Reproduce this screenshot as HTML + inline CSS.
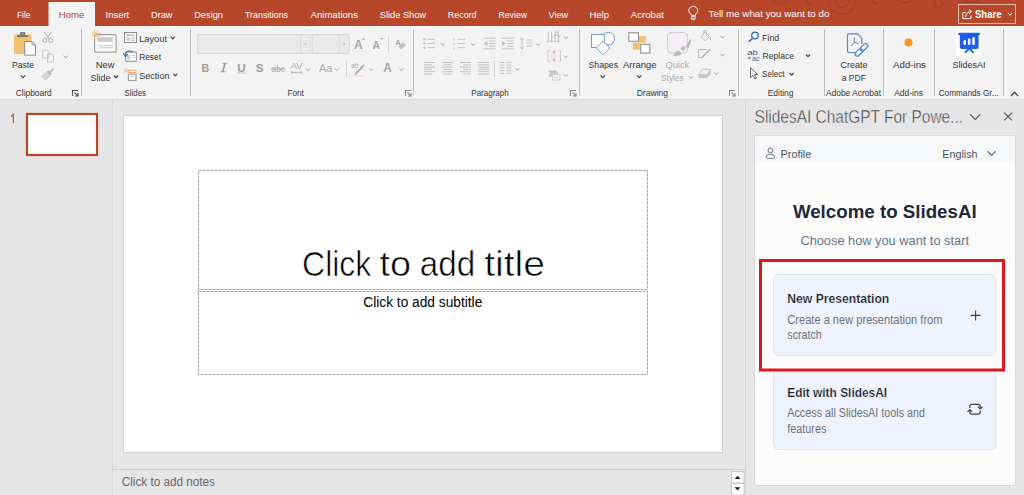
<!DOCTYPE html>
<html><head><meta charset="utf-8"><style>
html,body{margin:0;padding:0;width:1024px;height:495px;overflow:hidden;background:#E6E6E6}
svg{display:block;font-family:"Liberation Sans",sans-serif}
</style></head><body>
<svg width="1024" height="495" viewBox="0 0 1024 495">
<rect x="0" y="0" width="1024" height="495" fill="#E6E6E6"/>
<rect x="0" y="0" width="1024" height="26" fill="#B7472A"/>
<g fill="none" stroke="#A5412A" stroke-width="1.4">
<circle cx="781.3" cy="-9.5" r="12.5"/>
<circle cx="842" cy="1" r="13.5"/>
<circle cx="842.5" cy="0.5" r="7"/>
<circle cx="905" cy="-10" r="12.5"/>
<circle cx="971" cy="-10" r="12.5"/>
<path d="M934,0 C933,6 937,9 939,8 C943,7 944,3 941,0"/>
<path d="M807,0 C806,3 809,5 812,3"/>
<path d="M873,0 C873,3 876,5 878,2"/>
</g>
<rect x="0" y="26" width="1024" height="73" fill="#F3F3F3"/>
<rect x="0" y="99" width="1024" height="1" fill="#D9D9D9"/>
<rect x="48.5" y="2" width="46.5" height="24" fill="#F3F3F3"/>
<text x="17" y="17.6" font-size="9.2" fill="#FFFFFF" font-weight="normal" textLength="13.5" lengthAdjust="spacingAndGlyphs">File</text>
<text x="58.7" y="17.6" font-size="9.2" fill="#B7472A" font-weight="normal" textLength="25.7" lengthAdjust="spacingAndGlyphs">Home</text>
<text x="105.5" y="17.6" font-size="9.2" fill="#FFFFFF" font-weight="normal" textLength="23.7" lengthAdjust="spacingAndGlyphs">Insert</text>
<text x="151" y="17.6" font-size="9.2" fill="#FFFFFF" font-weight="normal" textLength="21.5" lengthAdjust="spacingAndGlyphs">Draw</text>
<text x="194.2" y="17.6" font-size="9.2" fill="#FFFFFF" font-weight="normal" textLength="28.8" lengthAdjust="spacingAndGlyphs">Design</text>
<text x="245" y="17.6" font-size="9.2" fill="#FFFFFF" font-weight="normal" textLength="43" lengthAdjust="spacingAndGlyphs">Transitions</text>
<text x="310.5" y="17.6" font-size="9.2" fill="#FFFFFF" font-weight="normal" textLength="47.5" lengthAdjust="spacingAndGlyphs">Animations</text>
<text x="379.8" y="17.6" font-size="9.2" fill="#FFFFFF" font-weight="normal" textLength="46.2" lengthAdjust="spacingAndGlyphs">Slide Show</text>
<text x="447.8" y="17.6" font-size="9.2" fill="#FFFFFF" font-weight="normal" textLength="28.7" lengthAdjust="spacingAndGlyphs">Record</text>
<text x="498.5" y="17.6" font-size="9.2" fill="#FFFFFF" font-weight="normal" textLength="28.5" lengthAdjust="spacingAndGlyphs">Review</text>
<text x="548.5" y="17.6" font-size="9.2" fill="#FFFFFF" font-weight="normal" textLength="19.5" lengthAdjust="spacingAndGlyphs">View</text>
<text x="589.5" y="17.6" font-size="9.2" fill="#FFFFFF" font-weight="normal" textLength="19.5" lengthAdjust="spacingAndGlyphs">Help</text>
<text x="630.8" y="17.6" font-size="9.2" fill="#FFFFFF" font-weight="normal" textLength="33.2" lengthAdjust="spacingAndGlyphs">Acrobat</text>
<path d="M691.6,16 L691.6,14.6 C690,13.6 688.8,12.2 688.8,10.8 A4.5,4.5 0 0 1 697.8,10.8 C697.8,12.2 696.6,13.6 695,14.6 L695,16 Z" fill="none" stroke="#FFFFFF" stroke-width="1"/>
<rect x="691.6" y="16" width="3.4" height="3" fill="none" stroke="#FFFFFF" stroke-width="1"/>
<line x1="692.5" y1="20" x2="694.2" y2="20" stroke="#F2D6CE" stroke-width="1"/>
<text x="708.6" y="17.1" font-size="9.8" fill="#FFFFFF" font-weight="normal" textLength="120.8" lengthAdjust="spacingAndGlyphs">Tell me what you want to do</text>
<rect x="958.5" y="4.5" width="57" height="19" fill="none" stroke="#E9B8AA" stroke-width="1"/>
<path d="M965.8,12.6 L962.8,12.6 L962.8,18.6 L971,18.6 L971,15.6" fill="none" stroke="#FFFFFF" stroke-width="1"/>
<path d="M965.8,17 C965.8,13.5 967.8,11.6 971.2,11.6" fill="none" stroke="#FFFFFF" stroke-width="1"/>
<path d="M969.2,9.4 L971.6,11.6 L969.2,13.8" fill="none" stroke="#FFFFFF" stroke-width="1"/>
<text x="975" y="18" font-size="10.3" fill="#FFFFFF" font-weight="bold" textLength="26.5" lengthAdjust="spacingAndGlyphs">Share</text>
<path d="M1008.0,13.1 L1010,15.299999999999999 L1012.0,13.1" fill="none" stroke="#FFFFFF" stroke-width="1"/>
<line x1="81.5" y1="29" x2="81.5" y2="96" stroke="#BFBFBF" stroke-width="1"/>
<line x1="190.5" y1="29" x2="190.5" y2="96" stroke="#BFBFBF" stroke-width="1"/>
<line x1="413.5" y1="29" x2="413.5" y2="96" stroke="#BFBFBF" stroke-width="1"/>
<line x1="579.5" y1="29" x2="579.5" y2="96" stroke="#BFBFBF" stroke-width="1"/>
<line x1="738.5" y1="29" x2="738.5" y2="96" stroke="#BFBFBF" stroke-width="1"/>
<line x1="824.5" y1="29" x2="824.5" y2="96" stroke="#BFBFBF" stroke-width="1"/>
<line x1="883.5" y1="29" x2="883.5" y2="96" stroke="#BFBFBF" stroke-width="1"/>
<line x1="934.5" y1="29" x2="934.5" y2="96" stroke="#BFBFBF" stroke-width="1"/>
<line x1="1003.5" y1="29" x2="1003.5" y2="96" stroke="#BFBFBF" stroke-width="1"/>
<text x="15.7" y="95.8" font-size="8.4" fill="#363636" font-weight="normal" textLength="36" lengthAdjust="spacingAndGlyphs">Clipboard</text>
<text x="124.6" y="95.8" font-size="8.4" fill="#363636" font-weight="normal" textLength="21.3" lengthAdjust="spacingAndGlyphs">Slides</text>
<text x="287.5" y="95.8" font-size="8.4" fill="#363636" font-weight="normal" textLength="16.4" lengthAdjust="spacingAndGlyphs">Font</text>
<text x="471.3" y="95.8" font-size="8.4" fill="#363636" font-weight="normal" textLength="37.4" lengthAdjust="spacingAndGlyphs">Paragraph</text>
<text x="636.7" y="95.8" font-size="8.4" fill="#363636" font-weight="normal" textLength="31.4" lengthAdjust="spacingAndGlyphs">Drawing</text>
<text x="767.7" y="95.8" font-size="8.4" fill="#363636" font-weight="normal" textLength="25.8" lengthAdjust="spacingAndGlyphs">Editing</text>
<text x="826" y="95.8" font-size="8.4" fill="#363636" font-weight="normal" textLength="55" lengthAdjust="spacingAndGlyphs">Adobe Acrobat</text>
<text x="894.2" y="95.8" font-size="8.4" fill="#363636" font-weight="normal" textLength="28.8" lengthAdjust="spacingAndGlyphs">Add-ins</text>
<text x="938.7" y="95.8" font-size="8.4" fill="#363636" font-weight="normal" textLength="59.8" lengthAdjust="spacingAndGlyphs">Commands Gr...</text>
<path d="M72.5,96.0 L72.5,90.5 L78.0,90.5 M74.5,92.5 L77.7,95.7 M78.0,93.0 L78.0,96.0 L75.0,96.0" fill="none" stroke="#505050" stroke-width="1.1"/>
<path d="M405.5,96.0 L405.5,90.5 L411.0,90.5 M407.5,92.5 L410.7,95.7 M411.0,93.0 L411.0,96.0 L408.0,96.0" fill="none" stroke="#8E8E8E" stroke-width="1.1"/>
<path d="M570.5,96.0 L570.5,90.5 L576.0,90.5 M572.5,92.5 L575.7,95.7 M576.0,93.0 L576.0,96.0 L573.0,96.0" fill="none" stroke="#8E8E8E" stroke-width="1.1"/>
<path d="M729.5,96.0 L729.5,90.5 L735.0,90.5 M731.5,92.5 L734.7,95.7 M735.0,93.0 L735.0,96.0 L732.0,96.0" fill="none" stroke="#8E8E8E" stroke-width="1.1"/>
<path d="M1011,96 L1014.5,92.3 L1018,96" fill="none" stroke="#444" stroke-width="1.3"/>
<rect x="14" y="34.6" width="17.6" height="19.5" fill="#EEC373" rx="1.2"/>
<rect x="17" y="35.2" width="11" height="1.8" fill="#707070"/>
<rect x="20.2" y="32.1" width="5" height="3.3" fill="#707070"/>
<rect x="22" y="33.2" width="1.3" height="1.5" fill="#EEC373"/>
<path d="M24.7,41.5 L32,41.5 L35.5,45 L35.5,55.2 L24.7,55.2 Z" fill="#FFFFFF" stroke="#8A8A8A" stroke-width="1"/>
<path d="M32,41.5 L32,45 L35.5,45" fill="none" stroke="#8A8A8A" stroke-width="0.8"/>
<text x="12" y="68" font-size="9.7" fill="#363636" font-weight="normal" textLength="22" lengthAdjust="spacingAndGlyphs">Paste</text>
<path d="M20.75,75.3 L23,77.7 L25.25,75.3" fill="none" stroke="#444" stroke-width="1.1"/>
<g fill="none" stroke="#ABABAB" stroke-width="1">
<circle cx="44.8" cy="40.5" r="2"/><circle cx="50.8" cy="40.5" r="2"/>
<path d="M46,38.8 L51.5,32 M49.5,38.8 L44,32" fill="none" stroke="#ABABAB" stroke-width="1"/>
</g>
<g fill="#EFEAEF" stroke="#C4BFC4" stroke-width="0.9">
<path d="M42.7,50 L47.5,50 L49,51.5 L49,58 L42.7,58 Z" fill="none"/>
<path d="M47.5,54 L52,54 L53.5,55.5 L53.5,62 L47.5,62 Z" fill="none"/>
</g>
<path d="M63.699999999999996,55.699999999999996 L65.8,57.9 L67.89999999999999,55.699999999999996" fill="none" stroke="#999" stroke-width="1"/>
<g transform="rotate(-45 48 74)">
<rect x="41.5" y="71" width="7" height="6" fill="#D3CFD3"/>
<line x1="42.5" y1="72.5" x2="48.5" y2="72.5" stroke="#E6E2E6" stroke-width="0.7"/>
<line x1="42.5" y1="74.5" x2="48.5" y2="74.5" stroke="#E6E2E6" stroke-width="0.7"/>
<rect x="48.5" y="71.5" width="2.5" height="5" fill="#BDB9BD"/>
<rect x="51" y="73" width="5" height="2" fill="#BDB9BD"/>
</g>
<rect x="94.6" y="34.6" width="21.5" height="17.6" fill="#FFFFFF" stroke="#A0A0A0" stroke-width="1.2" rx="2"/>
<rect x="97.2" y="37.2" width="15.8" height="4.6" fill="#CDCDCD"/>
<line x1="99.5" y1="45.6" x2="113" y2="45.6" stroke="#BDBDBD" stroke-width="0.9"/>
<line x1="99.5" y1="47.8" x2="113" y2="47.8" stroke="#BDBDBD" stroke-width="0.9"/>
<rect x="97.2" y="45.1" width="1" height="1" fill="#C8C8C8"/>
<rect x="97.2" y="47.3" width="1" height="1" fill="#C8C8C8"/>
<g stroke="#F0C05A" stroke-width="1.1" stroke-linecap="round">
<line x1="97.58" y1="35.11" x2="99.98" y2="36.11"/>
<line x1="96.71" y1="35.98" x2="97.71" y2="38.38"/>
<line x1="95.49" y1="35.98" x2="94.49" y2="38.38"/>
<line x1="94.62" y1="35.11" x2="92.22" y2="36.11"/>
<line x1="94.62" y1="33.89" x2="92.22" y2="32.89"/>
<line x1="95.49" y1="33.02" x2="94.49" y2="30.62"/>
<line x1="96.71" y1="33.02" x2="97.71" y2="30.62"/>
<line x1="97.58" y1="33.89" x2="99.98" y2="32.89"/>
</g>
<text x="95.7" y="68" font-size="9.7" fill="#363636" font-weight="normal" textLength="18.7" lengthAdjust="spacingAndGlyphs">New</text>
<text x="90.4" y="81" font-size="9.7" fill="#363636" font-weight="normal" textLength="20" lengthAdjust="spacingAndGlyphs">Slide</text>
<path d="M113.9,75.39999999999999 L116,77.8 L118.1,75.39999999999999" fill="none" stroke="#444" stroke-width="1.3"/>
<rect x="124.5" y="32.5" width="12" height="10" fill="#F8F8F8" stroke="#8E8E8E" stroke-width="1"/>
<rect x="126.5" y="34.5" width="8" height="1.5" fill="#BDBDBD"/>
<rect x="126.5" y="37.3" width="3.5" height="3.5" fill="#CFCFCF"/>
<line x1="131" y1="38" x2="134.5" y2="38" stroke="#BDBDBD" stroke-width="1"/>
<line x1="131" y1="40.3" x2="134.5" y2="40.3" stroke="#BDBDBD" stroke-width="1"/>
<text x="139.2" y="41.7" font-size="9.7" fill="#363636" font-weight="normal" textLength="27.8" lengthAdjust="spacingAndGlyphs">Layout</text>
<path d="M170.8,36.699999999999996 L172.8,38.9 L174.8,36.699999999999996" fill="none" stroke="#444" stroke-width="1.2"/>
<rect x="125.6" y="51.9" width="10.8" height="9.4" fill="#FFFFFF" stroke="#A0A0A0" stroke-width="1.2" rx="1"/>
<rect x="127" y="55" width="3.2" height="4.5" fill="#D0D0D0"/>
<line x1="131.3" y1="55.3" x2="135" y2="55.3" stroke="#C4C4C4" stroke-width="0.9"/>
<line x1="131.3" y1="57.3" x2="135" y2="57.3" stroke="#C4C4C4" stroke-width="0.9"/>
<path d="M125.2,55.8 C125.2,52.5 127.5,50.8 130,51.2 C131,51.4 131.8,52 132,52.8" fill="none" stroke="#3A78C2" stroke-width="1.3"/>
<path d="M123.3,53.3 L125.3,56.8 L127.8,54" fill="none" stroke="#3A78C2" stroke-width="1.2"/>
<text x="139.2" y="60.1" font-size="9.7" fill="#363636" font-weight="normal" textLength="21.8" lengthAdjust="spacingAndGlyphs">Reset</text>
<rect x="128.4" y="70.2" width="7.6" height="2.3" fill="#FFFFFF" stroke="#EFA56E" stroke-width="1"/>
<circle cx="126" cy="70.6" r="1.3" fill="none" stroke="#F2C27A" stroke-width="0.9"/>
<g stroke="#F2C27A" stroke-width="0.7">
<line x1="123.8" y1="68.4" x2="124.8" y2="69.4"/><line x1="127.2" y1="71.8" x2="128.2" y2="72.8"/><line x1="123.8" y1="72.8" x2="124.8" y2="71.8"/><line x1="127.2" y1="69.4" x2="128.2" y2="68.4"/>
</g>
<rect x="128.4" y="74.3" width="7.6" height="6.2" fill="#FFFFFF" stroke="#A0A0A0" stroke-width="1.2"/>
<line x1="130" y1="76.5" x2="134.5" y2="76.5" stroke="#C8C8C8" stroke-width="0.9"/>
<text x="139.2" y="78.7" font-size="9.7" fill="#363636" font-weight="normal" textLength="30.3" lengthAdjust="spacingAndGlyphs">Section</text>
<path d="M173.3,73.7 L175.3,75.89999999999999 L177.3,73.7" fill="none" stroke="#444" stroke-width="1.2"/>
<rect x="197.5" y="34.5" width="113.3" height="19" fill="#E9E9E9" stroke="#DADADA" stroke-width="1"/>
<line x1="300.5" y1="35" x2="300.5" y2="53" stroke="#DADADA" stroke-width="1"/>
<path d="M304,43.3 L307,43.3 L305.5,45 Z" fill="#B8B8B8"/>
<rect x="312.3" y="34.5" width="37.3" height="19" fill="#E9E9E9" stroke="#DADADA" stroke-width="1"/>
<line x1="339.3" y1="35" x2="339.3" y2="53" stroke="#DADADA" stroke-width="1"/>
<path d="M342.8,43.3 L345.8,43.3 L344.3,45 Z" fill="#B8B8B8"/>
<text x="354" y="48.7" font-size="13" fill="#A6A6A6" font-weight="bold" textLength="8.8" lengthAdjust="spacingAndGlyphs">A</text>
<path d="M362,39.8 L363.6,38 L365.2,39.8 Z" fill="#A6A6A6"/>
<text x="372.5" y="48.7" font-size="11" fill="#A6A6A6" font-weight="bold" textLength="7.5" lengthAdjust="spacingAndGlyphs">A</text>
<path d="M379.8,38 L381.4,39.8 L383,38 Z" fill="#A6A6A6"/>
<line x1="388.5" y1="36" x2="388.5" y2="52.5" stroke="#D6D6D6" stroke-width="1"/>
<text x="395.2" y="44.5" font-size="8" fill="#A6A6A6" font-weight="bold" textLength="5.5" lengthAdjust="spacingAndGlyphs">A</text>
<path d="M398.3,46.8 L403,42.1 L405.8,44.9 L401.1,49.6 Z" fill="#C4C0C4"/>
<text x="201.6" y="72" font-size="11.8" fill="#9C9C9C" font-weight="bold" textLength="7.6" lengthAdjust="spacingAndGlyphs">B</text>
<path d="M222.6,63.3 L227.3,63.3 M220.5,71.7 L225.2,71.7" fill="none" stroke="#9C9C9C" stroke-width="1.1"/>
<path d="M225,63.3 L222.8,71.7" fill="none" stroke="#9C9C9C" stroke-width="1.7"/>
<text x="237.3" y="71.8" font-size="11.8" fill="#9C9C9C" font-weight="bold" textLength="8.4" lengthAdjust="spacingAndGlyphs">U</text>
<line x1="237.5" y1="73" x2="245.6" y2="73" stroke="#B0B0B0" stroke-width="0.8"/>
<text x="255.8" y="72" font-size="11.8" fill="#9C9C9C" font-weight="bold" textLength="7.8" lengthAdjust="spacingAndGlyphs">S</text>
<text x="271.5" y="72" font-size="8.5" fill="#ABABAB" font-weight="normal" textLength="13.5" lengthAdjust="spacingAndGlyphs">abc</text>
<line x1="271" y1="69" x2="285.5" y2="69" stroke="#ABABAB" stroke-width="0.9"/>
<text x="290.5" y="69" font-size="8.5" fill="#ABABAB" font-weight="normal" textLength="12" lengthAdjust="spacingAndGlyphs">AV</text>
<path d="M291,72.3 L302,72.3 M292.5,70.8 L291,72.3 L292.5,73.8 M300.5,70.8 L302,72.3 L300.5,73.8" fill="none" stroke="#ABABAB" stroke-width="0.9"/>
<path d="M306.0,68.4 L308,70.6 L310.0,68.4" fill="none" stroke="#AAAAAA" stroke-width="1"/>
<text x="319" y="72.3" font-size="11" fill="#ABABAB" font-weight="normal" textLength="13.2" lengthAdjust="spacingAndGlyphs">Aa</text>
<path d="M335.0,68.4 L337,70.6 L339.0,68.4" fill="none" stroke="#AAAAAA" stroke-width="1"/>
<line x1="346.5" y1="60.5" x2="346.5" y2="77" stroke="#D6D6D6" stroke-width="1"/>
<text x="351.2" y="68.2" font-size="7.5" fill="#A6A6A6" font-weight="normal" textLength="7" lengthAdjust="spacingAndGlyphs">ab</text>
<path d="M355.2,72.8 L363.2,64.6 L364.6,66 L356.6,74.2 Z" fill="#AFAFAF"/>
<path d="M354.2,73.8 L355.2,72.8 L356.6,74.2 L355.4,74.9 Z" fill="#AFAFAF"/>
<line x1="351.5" y1="75.8" x2="363.5" y2="75.8" stroke="#EAD8EA" stroke-width="1"/>
<path d="M369.3,68.4 L371.3,70.6 L373.3,68.4" fill="none" stroke="#AAAAAA" stroke-width="1"/>
<text x="383.2" y="72" font-size="12.5" fill="#A6A6A6" font-weight="bold" textLength="8.5" lengthAdjust="spacingAndGlyphs">A</text>
<path d="M399.5,68.4 L401.5,70.6 L403.5,68.4" fill="none" stroke="#AAAAAA" stroke-width="1"/>
<circle cx="424.5" cy="39.3" r="1.2" fill="#C2C2C2"/>
<line x1="427.5" y1="39.3" x2="435" y2="39.3" stroke="#C2C2C2" stroke-width="1"/>
<circle cx="424.5" cy="43.5" r="1.2" fill="#C2C2C2"/>
<line x1="427.5" y1="43.5" x2="435" y2="43.5" stroke="#C2C2C2" stroke-width="1"/>
<circle cx="424.5" cy="47.699999999999996" r="1.2" fill="#C2C2C2"/>
<line x1="427.5" y1="47.699999999999996" x2="435" y2="47.699999999999996" stroke="#C2C2C2" stroke-width="1"/>
<path d="M441.2,43.199999999999996 L443.2,45.4 L445.2,43.199999999999996" fill="none" stroke="#AAAAAA" stroke-width="1"/>
<line x1="453.5" y1="38.5" x2="454.5" y2="40.5" stroke="#C2C2C2" stroke-width="1"/>
<line x1="457.5" y1="39.3" x2="465" y2="39.3" stroke="#C2C2C2" stroke-width="1"/>
<line x1="453.5" y1="43.0" x2="454.5" y2="45.0" stroke="#C2C2C2" stroke-width="1"/>
<line x1="457.5" y1="43.5" x2="465" y2="43.5" stroke="#C2C2C2" stroke-width="1"/>
<line x1="453.5" y1="47.5" x2="454.5" y2="49.5" stroke="#C2C2C2" stroke-width="1"/>
<line x1="457.5" y1="47.699999999999996" x2="465" y2="47.699999999999996" stroke="#C2C2C2" stroke-width="1"/>
<path d="M471.1,43.199999999999996 L473.1,45.4 L475.1,43.199999999999996" fill="none" stroke="#AAAAAA" stroke-width="1"/>
<line x1="483.5" y1="38.2" x2="495.5" y2="38.2" stroke="#C2C2C2" stroke-width="1"/>
<line x1="483.5" y1="48.8" x2="495.5" y2="48.8" stroke="#C2C2C2" stroke-width="1"/>
<line x1="489" y1="41.0" x2="495.5" y2="41.0" stroke="#C2C2C2" stroke-width="1"/>
<line x1="489" y1="43.6" x2="495.5" y2="43.6" stroke="#C2C2C2" stroke-width="1"/>
<line x1="489" y1="46.2" x2="495.5" y2="46.2" stroke="#C2C2C2" stroke-width="1"/>
<path d="M483.6,43.5 L487.5,40.8 L487.5,46.2 Z" fill="#C2C2C2"/>
<line x1="486" y1="43.5" x2="488.5" y2="43.5" stroke="#C2C2C2" stroke-width="1"/>
<line x1="501.8" y1="38.2" x2="513.8" y2="38.2" stroke="#C2C2C2" stroke-width="1"/>
<line x1="501.8" y1="48.8" x2="513.8" y2="48.8" stroke="#C2C2C2" stroke-width="1"/>
<line x1="507.3" y1="41.0" x2="513.8" y2="41.0" stroke="#C2C2C2" stroke-width="1"/>
<line x1="507.3" y1="43.6" x2="513.8" y2="43.6" stroke="#C2C2C2" stroke-width="1"/>
<line x1="507.3" y1="46.2" x2="513.8" y2="46.2" stroke="#C2C2C2" stroke-width="1"/>
<path d="M506,43.5 L502.2,40.8 L502.2,46.2 Z" fill="#C2C2C2"/>
<line x1="522" y1="38" x2="522" y2="49" stroke="#C2C2C2" stroke-width="1"/>
<path d="M520,40 L522,37.7 L524,40 M520,47 L522,49.3 L524,47" fill="none" stroke="#C2C2C2" stroke-width="1"/>
<line x1="526" y1="40" x2="532.5" y2="40" stroke="#C2C2C2" stroke-width="1"/>
<line x1="526" y1="43" x2="532.5" y2="43" stroke="#C2C2C2" stroke-width="1"/>
<line x1="526" y1="46" x2="532.5" y2="46" stroke="#C2C2C2" stroke-width="1"/>
<path d="M536.1,43.4 L538.1,45.6 L540.1,43.4" fill="none" stroke="#AAAAAA" stroke-width="1"/>
<line x1="548.2" y1="31.5" x2="548.2" y2="42" stroke="#C2C2C2" stroke-width="1"/>
<path d="M546.9000000000001,40.8 L548.2,42.3 L549.5,40.8" fill="none" stroke="#C2C2C2" stroke-width="0.9"/>
<line x1="551.6" y1="31.5" x2="551.6" y2="42" stroke="#C2C2C2" stroke-width="1"/>
<path d="M550.3000000000001,40.8 L551.6,42.3 L552.9,40.8" fill="none" stroke="#C2C2C2" stroke-width="0.9"/>
<line x1="555" y1="31.5" x2="555" y2="42" stroke="#C2C2C2" stroke-width="1"/>
<path d="M553.7,40.8 L555,42.3 L556.3,40.8" fill="none" stroke="#C2C2C2" stroke-width="0.9"/>
<line x1="558.4" y1="31.5" x2="558.4" y2="42" stroke="#C2C2C2" stroke-width="1"/>
<path d="M557.1,40.8 L558.4,42.3 L559.6999999999999,40.8" fill="none" stroke="#C2C2C2" stroke-width="0.9"/>
<path d="M553.6,37.5 L556.7,31.2 L559.8,37.5 M554.6,35.5 L558.8,35.5" fill="none" stroke="#C2C2C2" stroke-width="1"/>
<path d="M564.0,36.6 L566,38.800000000000004 L568.0,36.6" fill="none" stroke="#AAAAAA" stroke-width="1"/>
<path d="M550,50.5 L548,50.5 L548,61.5 L550,61.5 M558.5,50.5 L560.5,50.5 L560.5,61.5 L558.5,61.5" fill="none" stroke="#CFCACF" stroke-width="1"/>
<rect x="548.5" y="51" width="11.5" height="10" fill="#F3EEF3"/>
<line x1="550.5" y1="56" x2="558" y2="56" stroke="#D6D0D6" stroke-width="1"/>
<path d="M554.2,51 L554.2,54 M552.6,52.6 L554.2,51 L555.8,52.6 M554.2,58 L554.2,61 M552.6,59.4 L554.2,61 L555.8,59.4" fill="none" stroke="#C2C2C2" stroke-width="1.1"/>
<path d="M564.0,55.5 L566,57.7 L568.0,55.5" fill="none" stroke="#AAAAAA" stroke-width="1"/>
<path d="M548,70.5 L556,70.5 L558,73.5 L556,76.5 L548,76.5 L550,73.5 Z" fill="#C9C4C9"/>
<rect x="552.5" y="74.5" width="7.5" height="5.5" fill="#F6F2F6" stroke="#CFCACF" stroke-width="1"/>
<line x1="554.5" y1="77.3" x2="558" y2="77.3" stroke="#D6D0D6" stroke-width="1"/>
<path d="M564.0,74.2 L566,76.39999999999999 L568.0,74.2" fill="none" stroke="#AAAAAA" stroke-width="1"/>
<line x1="424" y1="62.5" x2="435" y2="62.5" stroke="#C2C2C2" stroke-width="1"/>
<line x1="424" y1="64.8" x2="432" y2="64.8" stroke="#C2C2C2" stroke-width="1"/>
<line x1="424" y1="67.1" x2="435" y2="67.1" stroke="#C2C2C2" stroke-width="1"/>
<line x1="424" y1="69.4" x2="432" y2="69.4" stroke="#C2C2C2" stroke-width="1"/>
<line x1="424" y1="71.7" x2="435" y2="71.7" stroke="#C2C2C2" stroke-width="1"/>
<line x1="424" y1="74.0" x2="432" y2="74.0" stroke="#C2C2C2" stroke-width="1"/>
<line x1="442.0" y1="62.5" x2="453.0" y2="62.5" stroke="#C2C2C2" stroke-width="1"/>
<line x1="443.5" y1="64.8" x2="451.5" y2="64.8" stroke="#C2C2C2" stroke-width="1"/>
<line x1="442.0" y1="67.1" x2="453.0" y2="67.1" stroke="#C2C2C2" stroke-width="1"/>
<line x1="443.5" y1="69.4" x2="451.5" y2="69.4" stroke="#C2C2C2" stroke-width="1"/>
<line x1="442.0" y1="71.7" x2="453.0" y2="71.7" stroke="#C2C2C2" stroke-width="1"/>
<line x1="443.5" y1="74.0" x2="451.5" y2="74.0" stroke="#C2C2C2" stroke-width="1"/>
<line x1="460" y1="62.5" x2="471" y2="62.5" stroke="#C2C2C2" stroke-width="1"/>
<line x1="463" y1="64.8" x2="471" y2="64.8" stroke="#C2C2C2" stroke-width="1"/>
<line x1="460" y1="67.1" x2="471" y2="67.1" stroke="#C2C2C2" stroke-width="1"/>
<line x1="463" y1="69.4" x2="471" y2="69.4" stroke="#C2C2C2" stroke-width="1"/>
<line x1="460" y1="71.7" x2="471" y2="71.7" stroke="#C2C2C2" stroke-width="1"/>
<line x1="463" y1="74.0" x2="471" y2="74.0" stroke="#C2C2C2" stroke-width="1"/>
<line x1="478.2" y1="62.5" x2="489.2" y2="62.5" stroke="#C2C2C2" stroke-width="1"/>
<line x1="478.2" y1="64.8" x2="489.2" y2="64.8" stroke="#C2C2C2" stroke-width="1"/>
<line x1="478.2" y1="67.1" x2="489.2" y2="67.1" stroke="#C2C2C2" stroke-width="1"/>
<line x1="478.2" y1="69.4" x2="489.2" y2="69.4" stroke="#C2C2C2" stroke-width="1"/>
<line x1="478.2" y1="71.7" x2="489.2" y2="71.7" stroke="#C2C2C2" stroke-width="1"/>
<line x1="478.2" y1="74.0" x2="489.2" y2="74.0" stroke="#C2C2C2" stroke-width="1"/>
<line x1="494.5" y1="60.5" x2="494.5" y2="77" stroke="#D6D6D6" stroke-width="1"/>
<line x1="499.5" y1="62.5" x2="504.5" y2="62.5" stroke="#C2C2C2" stroke-width="1"/>
<line x1="506.5" y1="62.5" x2="511.5" y2="62.5" stroke="#C2C2C2" stroke-width="1"/>
<line x1="499.5" y1="65.2" x2="504.5" y2="65.2" stroke="#C2C2C2" stroke-width="1"/>
<line x1="506.5" y1="65.2" x2="511.5" y2="65.2" stroke="#C2C2C2" stroke-width="1"/>
<line x1="499.5" y1="67.9" x2="504.5" y2="67.9" stroke="#C2C2C2" stroke-width="1"/>
<line x1="506.5" y1="67.9" x2="511.5" y2="67.9" stroke="#C2C2C2" stroke-width="1"/>
<line x1="499.5" y1="70.6" x2="504.5" y2="70.6" stroke="#C2C2C2" stroke-width="1"/>
<line x1="506.5" y1="70.6" x2="511.5" y2="70.6" stroke="#C2C2C2" stroke-width="1"/>
<line x1="499.5" y1="73.3" x2="504.5" y2="73.3" stroke="#C2C2C2" stroke-width="1"/>
<line x1="506.5" y1="73.3" x2="511.5" y2="73.3" stroke="#C2C2C2" stroke-width="1"/>
<path d="M515.3,68.2 L517.3,70.39999999999999 L519.3,68.2" fill="none" stroke="#AAAAAA" stroke-width="1"/>
<circle cx="608.2" cy="38.6" r="6.3" fill="#FFFFFF" stroke="#6F9BD6" stroke-width="1"/>
<rect x="591.5" y="34.5" width="12.8" height="13" fill="#FFFFFF" stroke="#6F9BD6" stroke-width="1"/>
<path d="M603,41.2 L609.8,48 L603,54.8 L596.2,48 Z" fill="#FFFFFF" stroke="#6F9BD6" stroke-width="1"/>
<text x="588.5" y="68" font-size="9.7" fill="#363636" font-weight="normal" textLength="29.5" lengthAdjust="spacingAndGlyphs">Shapes</text>
<path d="M600.55,75.3 L602.8,77.7 L605.05,75.3" fill="none" stroke="#444" stroke-width="1.1"/>
<rect x="638.9" y="36" width="7" height="6.8" fill="#EEC373"/>
<rect x="632.9" y="42.8" width="7" height="6.7" fill="#EEC373"/>
<rect x="628.8" y="32.7" width="9.6" height="8.6" fill="#FFFFFF" stroke="#999999" stroke-width="1.2"/>
<rect x="640.7" y="44.4" width="9.2" height="8.7" fill="#FFFFFF" stroke="#999999" stroke-width="1.2"/>
<text x="623" y="68" font-size="9.7" fill="#363636" font-weight="normal" textLength="33.6" lengthAdjust="spacingAndGlyphs">Arrange</text>
<path d="M636.85,75.3 L639.1,77.7 L641.35,75.3" fill="none" stroke="#444" stroke-width="1.1"/>
<rect x="667.5" y="32.5" width="20" height="20.5" fill="#F4EFF4" stroke="#D0CCD0" stroke-width="1" rx="3.5"/>
<path d="M673,55.9 C674.5,52.8 676.6,50.8 679,51 L681.2,53.2 C681.3,55.3 678.3,56.2 673,55.9 Z" fill="#B8B8B8"/>
<rect x="681.2" y="46.8" width="4" height="3.2" transform="rotate(-45 683.2 48.4)" fill="#B8B8B8"/>
<path d="M685.6,46.6 L690.2,39.2 L691.4,40 L688.3,48.4 Z" fill="#B8B8B8"/>
<text x="665.6" y="68" font-size="9.7" fill="#ABABAB" font-weight="normal" textLength="23.5" lengthAdjust="spacingAndGlyphs">Quick</text>
<text x="661.1" y="81" font-size="9.7" fill="#ABABAB" font-weight="normal" textLength="22.5" lengthAdjust="spacingAndGlyphs">Styles</text>
<path d="M688.9,76.2 L691,78.39999999999999 L693.1,76.2" fill="none" stroke="#AAAAAA" stroke-width="1"/>
<path d="M700.8,36.5 L705.2,32.3 L709.6,36.5 L705.2,40.7 Z" fill="#F5F1F5" stroke="#BDB8BD" stroke-width="1"/>
<path d="M703.6,34.2 L703.6,31.8 A1.4,1.4 0 0 1 706.4,31.8 L706.4,35.5" fill="none" stroke="#BDB8BD" stroke-width="0.9"/>
<path d="M709.6,36.5 C710.6,37.8 710.8,39 710.2,40" fill="none" stroke="#BDB8BD" stroke-width="1"/>
<path d="M720.4,36.1 L722.4,38.300000000000004 L724.4,36.1" fill="none" stroke="#AAAAAA" stroke-width="1"/>
<path d="M707.3,49.6 L698.6,49.6 L698.6,57.6 L702,57.6" fill="none" stroke="#BDB8BD" stroke-width="1"/>
<path d="M701.8,57.6 L710.2,49.2" fill="none" stroke="#B5B0B5" stroke-width="1.6"/>
<path d="M720.4,54.0 L722.4,56.2 L724.4,54.0" fill="none" stroke="#AAAAAA" stroke-width="1"/>
<path d="M698.5,74.5 L702.5,69 L711,69.5 L710.5,74.5 L706.5,78.3 L698.5,77.8 Z" fill="#C9C5C9"/>
<path d="M698.5,74.5 L702.5,69 L711,69.5 L706.5,75 Z" fill="#F0ECF0" stroke="#C4BFC4" stroke-width="0.8"/>
<path d="M714.4,72.4 L716.4,74.6 L718.4,72.4" fill="none" stroke="#AAAAAA" stroke-width="1"/>
<circle cx="755" cy="35.5" r="3.3" fill="none" stroke="#2F6DB5" stroke-width="1.3"/>
<line x1="752.5" y1="38.2" x2="748.8" y2="41.8" stroke="#2F6DB5" stroke-width="1.6"/>
<text x="762.1" y="41.3" font-size="9.7" fill="#363636" font-weight="normal" textLength="17.2" lengthAdjust="spacingAndGlyphs">Find</text>
<text x="747.3" y="54.5" font-size="7" fill="#555" font-weight="normal" textLength="5.5" lengthAdjust="spacingAndGlyphs">a</text>
<text x="752.5" y="54.5" font-size="7" fill="#7C4FA8" font-weight="normal" textLength="5.5" lengthAdjust="spacingAndGlyphs">b</text>
<text x="752" y="60.5" font-size="7" fill="#2F6DB5" font-weight="normal" textLength="7.5" lengthAdjust="spacingAndGlyphs">ac</text>
<path d="M747.5,58 L750.5,58 M749.2,56.8 L750.5,58 L749.2,59.2" fill="none" stroke="#2F6DB5" stroke-width="0.8"/>
<text x="762.6" y="58.8" font-size="9.7" fill="#363636" font-weight="normal" textLength="31.4" lengthAdjust="spacingAndGlyphs">Replace</text>
<path d="M806.0,54.5 L808,56.7 L810.0,54.5" fill="none" stroke="#444" stroke-width="1.2"/>
<path d="M750.5,67.8 L750.5,77.5 L753,75.2 L755,79 L756.5,78.2 L754.5,74.5 L757.8,74.5 Z" fill="#FFFFFF" stroke="#555" stroke-width="0.9"/>
<text x="762.1" y="77.2" font-size="9.7" fill="#363636" font-weight="normal" textLength="22.5" lengthAdjust="spacingAndGlyphs">Select</text>
<path d="M789.6,73.0 L791.6,75.19999999999999 L793.6,73.0" fill="none" stroke="#444" stroke-width="1.2"/>
<path d="M856,52.5 L849,52.5 Q847.5,52.5 847.5,51 L847.5,35.2 Q847.5,33.8 849,33.8 L857.5,33.8 L861.8,38.2 L861.8,44" fill="none" stroke="#4F84E0" stroke-width="1.2" stroke-linejoin="round"/>
<path d="M854.3,37.3 L854.3,42.2 L851.2,45.8 M854.3,42.2 L858.8,43.8" fill="none" stroke="#4F84E0" stroke-width="1"/>
<g transform="rotate(-45 861.5 49.8)" fill="none" stroke="#4F84E0" stroke-width="1.2"><rect x="853.5" y="47.6" width="8.6" height="4.4" rx="2.2"/><rect x="860.9" y="47.6" width="8.6" height="4.4" rx="2.2"/></g>
<text x="840.5" y="68" font-size="9.7" fill="#363636" font-weight="normal" textLength="27" lengthAdjust="spacingAndGlyphs">Create</text>
<text x="841.7" y="81" font-size="9.7" fill="#363636" font-weight="normal" textLength="24.3" lengthAdjust="spacingAndGlyphs">a PDF</text>
<circle cx="908.5" cy="42.5" r="4" fill="#F7941D"/>
<text x="893" y="68" font-size="9.7" fill="#363636" font-weight="normal" textLength="33" lengthAdjust="spacingAndGlyphs">Add-ins</text>
<rect x="956" y="30.5" width="25.5" height="25" fill="#FFFFFF"/>
<rect x="958.2" y="32.7" width="21.8" height="2.6" fill="#1B5EF0" rx="1.3"/>
<path d="M959.8,34.5 L978.6,34.5 L978.6,46.8 Q978.6,49 976.4,49 L962,49 Q959.8,49 959.8,46.8 Z" fill="#1B5EF0"/>
<rect x="963.5" y="40" width="2.5" height="5" fill="#FFFFFF" rx="1.2"/>
<rect x="967.9" y="38.4" width="2.5" height="6.6" fill="#FFFFFF" rx="1.2"/>
<rect x="972.3" y="37" width="2.5" height="8" fill="#FFFFFF" rx="1.2"/>
<path d="M969.2,48.5 L965.3,52.3 M969.2,48.5 L973.1,52.3" fill="none" stroke="#1B5EF0" stroke-width="1.8" stroke-linecap="round"/>
<text x="952.5" y="68" font-size="9.7" fill="#363636" font-weight="normal" textLength="33" lengthAdjust="spacingAndGlyphs">SlidesAI</text>
<rect x="112" y="100" width="1" height="395" fill="#D8D8D8"/>
<path d="M10.8,116.6 L13.4,114.4 L13.4,123" fill="none" stroke="#C0533A" stroke-width="1.2"/>
<rect x="27" y="114" width="70" height="41" fill="#FFFFFF" stroke="#B7472A" stroke-width="2.2"/>
<rect x="123.5" y="115.5" width="599" height="337" fill="#FFFFFF" stroke="#D3D3D3" stroke-width="1"/>
<g fill="none" stroke="#A0A0A0" stroke-width="1" stroke-dasharray="3,1">
<rect x="198.5" y="170.5" width="449" height="119"/>
<rect x="198.5" y="291.5" width="449" height="83"/>
</g>
<text x="302.1" y="275.9" font-size="35" fill="#000000" font-weight="normal" textLength="69.2" lengthAdjust="spacingAndGlyphs" stroke="#FFFFFF" stroke-width="0.6">Click</text>
<text x="379.5" y="275.9" font-size="35" fill="#000000" font-weight="normal" textLength="31.5" lengthAdjust="spacingAndGlyphs" stroke="#FFFFFF" stroke-width="0.6">to</text>
<text x="419.8" y="275.9" font-size="35" fill="#000000" font-weight="normal" textLength="55.5" lengthAdjust="spacingAndGlyphs" stroke="#FFFFFF" stroke-width="0.6">add</text>
<text x="484.2" y="275.9" font-size="35" fill="#000000" font-weight="normal" textLength="60.9" lengthAdjust="spacingAndGlyphs" stroke="#FFFFFF" stroke-width="0.6">title</text>
<text x="363.3" y="306.8" font-size="13.8" fill="#000000" font-weight="normal" textLength="119" lengthAdjust="spacingAndGlyphs">Click to add subtitle</text>
<rect x="113" y="469" width="632" height="1" fill="#D2D2D2"/>
<text x="121.7" y="485.7" font-size="12" fill="#666666" font-weight="normal" textLength="93.3" lengthAdjust="spacingAndGlyphs">Click to add notes</text>
<rect x="731.5" y="471.5" width="12.5" height="11.5" fill="#FFFFFF" stroke="#C8C8C8" stroke-width="1"/>
<rect x="731.5" y="483.5" width="12.5" height="11.5" fill="#FFFFFF" stroke="#C8C8C8" stroke-width="1"/>
<path d="M734.5,479 L737.5,475.8 L740.6,479 Z" fill="#222"/>
<path d="M734.5,487.2 L737.5,490.4 L740.6,487.2 Z" fill="#222"/>
<rect x="745" y="101" width="1" height="394" fill="#D6D6D6"/>
<text x="754.6" y="123.3" font-size="18.3" fill="#3A3A3A" font-weight="normal" textLength="208.5" lengthAdjust="spacingAndGlyphs" stroke="#E6E6E6" stroke-width="0.45">SlidesAI ChatGPT For Powe...</text>
<path d="M970,114.3 L975.2,119.5 L980.4,114.3" fill="none" stroke="#555" stroke-width="1.1"/>
<path d="M1004.2,112.6 L1012,120.4 M1012,112.6 L1004.2,120.4" fill="none" stroke="#555" stroke-width="1.1"/>
<rect x="754.5" y="135.5" width="261" height="350" fill="#FCFCFC" stroke="#D9D9D9" stroke-width="1"/>
<rect x="755" y="136" width="260" height="26" fill="#F7F8FA"/>
<circle cx="770.4" cy="150.4" r="2.4" fill="none" stroke="#6B7280" stroke-width="1"/>
<path d="M766.2,157.3 C766.2,155.3 768,154.2 770.4,154.2 C772.8,154.2 774.6,155.3 774.6,157.3 C774.6,158.2 773.5,158.5 770.4,158.5 C767.3,158.5 766.2,158.2 766.2,157.3 Z" fill="none" stroke="#6B7280" stroke-width="1"/>
<text x="780.6" y="158" font-size="11.5" fill="#4B5563" font-weight="normal" textLength="30.6" lengthAdjust="spacingAndGlyphs">Profile</text>
<text x="942.3" y="158" font-size="11.5" fill="#4B5563" font-weight="normal" textLength="35.3" lengthAdjust="spacingAndGlyphs">English</text>
<path d="M987.7,151.3 L991.7,155.3 L995.7,151.3" fill="none" stroke="#4B5563" stroke-width="1.1"/>
<text x="792.9" y="218.4" font-size="19" fill="#1E293B" font-weight="bold" textLength="183.7" lengthAdjust="spacingAndGlyphs">Welcome to SlidesAI</text>
<text x="800.4" y="244.8" font-size="13" fill="#64748B" font-weight="normal" textLength="168.6" lengthAdjust="spacingAndGlyphs">Choose how you want to start</text>
<rect x="773.5" y="274.5" width="222.5" height="81" fill="#EEF3FD" stroke="#DCE3F1" stroke-width="1" rx="5"/>
<text x="787.3" y="303" font-size="13" fill="#161D2C" font-weight="bold" textLength="102" lengthAdjust="spacingAndGlyphs" stroke="#EEF3FD" stroke-width="0.2">New Presentation</text>
<text x="787.3" y="323.5" font-size="12" fill="#6B7280" font-weight="normal" textLength="155.2" lengthAdjust="spacingAndGlyphs">Create a new presentation from</text>
<text x="787.3" y="338.6" font-size="12" fill="#6B7280" font-weight="normal" textLength="34.5" lengthAdjust="spacingAndGlyphs">scratch</text>
<path d="M975.6,310.4 L975.6,320.4 M970.6,315.4 L980.6,315.4" fill="none" stroke="#374151" stroke-width="1.1"/>
<rect x="773.5" y="369.5" width="222.5" height="80" fill="#EEF3FD" stroke="#DCE3F1" stroke-width="1" rx="5"/>
<text x="787.3" y="397.3" font-size="13" fill="#161D2C" font-weight="bold" textLength="99.8" lengthAdjust="spacingAndGlyphs" stroke="#EEF3FD" stroke-width="0.2">Edit with SlidesAI</text>
<text x="787.3" y="416.7" font-size="12" fill="#6B7280" font-weight="normal" textLength="137.7" lengthAdjust="spacingAndGlyphs">Access all SlidesAI tools and</text>
<text x="787.3" y="432.6" font-size="12" fill="#6B7280" font-weight="normal" textLength="39" lengthAdjust="spacingAndGlyphs">features</text>
<path d="M969.8,408 L969.8,406.3 Q969.8,404.3 971.8,404.3 L978,404.3 Q980.2,404.3 980.2,406.3 L980.2,408.3" fill="none" stroke="#374151" stroke-width="1.2"/>
<path d="M977.9,406.6 L980.2,408.9 L982.5,406.6" fill="none" stroke="#374151" stroke-width="1.2"/>
<path d="M980.2,410.5 L980.2,412 Q980.2,414.1 978.2,414.1 L971.8,414.1 Q969.8,414.1 969.8,412 L969.8,410.2" fill="none" stroke="#374151" stroke-width="1.2"/>
<path d="M967.5,411.9 L969.8,409.6 L972.1,411.9" fill="none" stroke="#374151" stroke-width="1.2"/>
<rect x="760.5" y="260.5" width="243" height="109.5" fill="none" stroke="#E0161B" stroke-width="3"/>
</svg>
</body></html>
